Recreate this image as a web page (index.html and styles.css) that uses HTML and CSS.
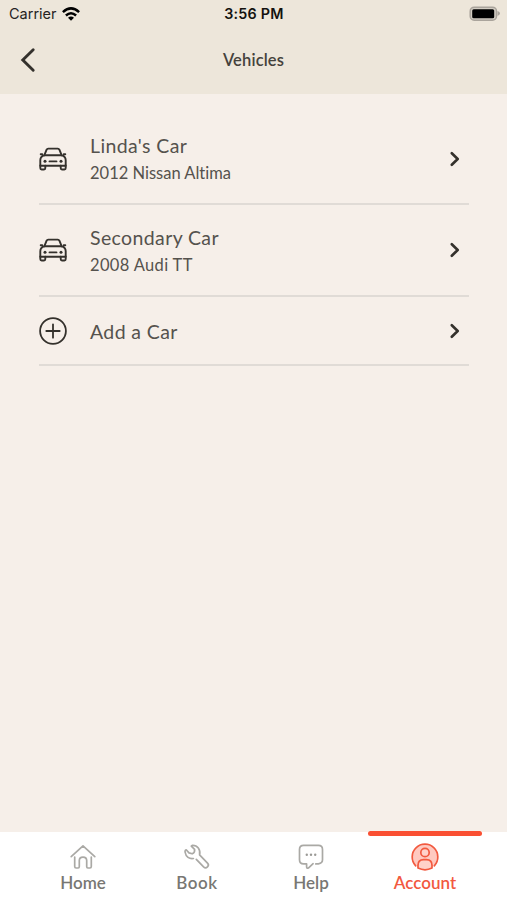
FILE: index.html
```html
<!DOCTYPE html>
<html lang="en">
<head>
<meta charset="utf-8">
<meta name="viewport" content="width=device-width, initial-scale=1">
<title>Vehicles</title>
<link rel="stylesheet" href="styles.css">
</head>
<body>
<svg width="0" height="0" class="sprite" aria-hidden="true">
  <symbol id="car" viewBox="0 0 28 24">
    <g fill="none" stroke="currentColor" stroke-width="1.9" stroke-linecap="round" stroke-linejoin="round">
      <path d="M5.3 8.3 7.6 2.7Q8 1.6 9.2 1.6H18.8Q20 1.6 20.4 2.7L22.7 8.3"/>
      <path d="M1.7 7.2H3.3M24.7 7.2H26.3M5.3 8.3H22.7Q26.7 9.3 26.7 13.2V18.7H1.3V13.2Q1.3 9.3 5.3 8.3Z"/>
      <path d="M1.3 18.5V21Q1.3 22.5 2.6 22.5H5Q6.3 22.5 6.3 21V18.8M21.7 18.8V21Q21.7 22.5 23 22.5H25.4Q26.7 22.5 26.7 21V18.5M10.5 14.4H17.5"/>
    </g>
    <circle cx="6" cy="14.2" r="1.5" fill="currentColor"/>
    <circle cx="22" cy="14.2" r="1.5" fill="currentColor"/>
  </symbol>
  <symbol id="chevron" viewBox="0 0 10 16"><path d="M1.8 2.2 7.7 8 1.8 13.8" fill="none" stroke="currentColor" stroke-width="2.6" stroke-linecap="round" stroke-linejoin="round"/></symbol>
</svg>
<header class="top">
  <div class="status">
    <div class="carrier"><span>Carrier</span>
      <svg width="18" height="14" viewBox="0 0 18 14"><g fill="none" stroke="#000" stroke-width="2.5"><path d="M.9 5.1Q9-2.3 17.1 5.1"/><path d="M3.9 8.5Q9 3.9 14.1 8.5"/></g><path d="M6 10.7Q9 8.2 12 10.7L9 13.8Z"/></svg>
    </div>
    <span class="time">3:56 PM</span>
    <svg class="battery" width="32" height="16" viewBox="0 0 32 16"><rect x="1.2" y="1.2" width="26.3" height="13" rx="4" fill="#d3cdc3" stroke="#aaa49c" stroke-width="1.5"/><rect x="3.2" y="3.2" width="22" height="9" rx="1.5"/><path d="M28.5 5.1Q31 6.1 31 7.5T28.5 9.9Z" fill="#aaa49c"/></svg>
  </div>
  <div class="nav">
    <svg class="back" width="16" height="26" viewBox="0 0 16 26"><path d="M13.2 2.8 2.8 13 13.2 23.2" fill="none" stroke="currentColor" stroke-width="2.9" stroke-linecap="round" stroke-linejoin="miter"/></svg>
    <h1>Vehicles</h1>
  </div>
</header>
<main class="list">
  <div class="row first">
    <svg class="icon" width="28" height="24"><use href="#car"/></svg>
    <div class="text"><div class="name">Linda's Car</div><div class="model">2012 Nissan Altima</div></div>
    <svg class="chev" width="10" height="16"><use href="#chevron"/></svg>
  </div>
  <div class="row">
    <svg class="icon" width="28" height="24"><use href="#car"/></svg>
    <div class="text"><div class="name">Secondary Car</div><div class="model wide">2008 Audi TT</div></div>
    <svg class="chev" width="10" height="16"><use href="#chevron"/></svg>
  </div>
  <div class="row add">
    <svg class="icon" width="28" height="28" viewBox="0 0 28 28" fill="none" stroke="currentColor" stroke-width="1.8" stroke-linecap="round"><circle cx="14" cy="14" r="12.9"/><path d="M14 7.3V20.7M7.3 14H20.7"/></svg>
    <div class="text"><div class="name">Add a Car</div></div>
    <svg class="chev" width="10" height="16"><use href="#chevron"/></svg>
  </div>
</main>
<nav class="tabs">
  <a class="tab">
    <svg width="28" height="28" viewBox="0 0 28 28" fill="none" stroke="#aaa9a5" stroke-width="1.7" stroke-linecap="round" stroke-linejoin="round"><path d="M2.2 13.6 14 2.8 25.8 13.6M5.7 14V23.6Q5.7 25 7.1 25H9.1Q10.3 25 10.3 23.6V17.6Q10.3 14.2 14 14.2T17.7 17.6V23.6Q17.7 25 18.9 25H20.9Q22.3 25 22.3 23.6V14"/></svg>
    <span>Home</span>
  </a>
  <a class="tab">
    <svg width="28" height="28" viewBox="0 0 28 28" fill="none" stroke="#aaa9a5" stroke-width="1.7" stroke-linecap="round" stroke-linejoin="round"><path d="M13.3 16.3 20.6 23.9C23.2 26.4 27 22.8 24.5 20.1L16.6 11.9C17.8 6.5 14.4 2 9.3 2.3L8.3 3.2 11.6 6.4Q12.1 9.6 9.2 10.8L6 9.9 3.2 6.8Q1.6 7.2 2.2 9.5C2.8 13.7 6.3 16.2 10.4 15.5"/></svg>
    <span class="book">Book</span>
  </a>
  <a class="tab">
    <svg width="28" height="28" viewBox="0 0 28 28"><path d="M18.8 20.9H21.4Q25.5 20.3 25.5 16.8V6.5Q25.5 2.4 21.4 2.4H6.6Q2.5 2.4 2.5 6.5V16.8Q2.5 20.9 6.6 20.9H9.6V24Q9.8 26 11.6 24.8L16.1 20.7" fill="none" stroke="#aaa9a5" stroke-width="1.7" stroke-linecap="round" stroke-linejoin="round"/><g fill="#9b9a96"><circle cx="9.8" cy="11.7" r="1.2"/><circle cx="14" cy="11.7" r="1.2"/><circle cx="18.2" cy="11.7" r="1.2"/></g></svg>
    <span>Help</span>
  </a>
  <a class="tab active">
    <svg width="28" height="28" viewBox="0 0 28 28" stroke="#f2593f" stroke-width="1.7" stroke-linecap="round" stroke-linejoin="round"><circle cx="14" cy="14" r="12" fill="#ffc9c0" stroke="none"/><path d="M4.7 22.8A12.8 12.8 0 1 1 23.3 22.8" fill="none"/><circle cx="14" cy="9.5" r="4.2" fill="#ffd2ca"/><path d="M7 25.1V22.3Q7 16.6 12.5 16.6H15.5Q21 16.6 21 22.3V25.1Q14 28.5 7 25.1Z" fill="#ffd2ca"/></svg>
    <span>Account</span>
  </a>
</nav>
</body>
</html>
```
FILE: styles.css
```css
* { box-sizing: border-box; }
body {
  margin: 0;
  height: 900px;
  display: flex;
  flex-direction: column;
  overflow: hidden;
  background: #f6efe9;
  color: #34312c;
  font-family: Lato, "Liberation Sans", sans-serif;
  font-variant-ligatures: none;
}
svg { display: block; flex: none; }
.sprite { position: absolute; }
.top { height: 94px; background: #ede6da; }
.status {
  height: 27px;
  padding: 0 6px 0 9px;
  display: grid;
  grid-template-columns: 1fr auto 1fr;
  align-items: center;
  font-family: Inter, sans-serif;
  color: #000;
}
.carrier { display: flex; align-items: center; gap: 5px; font-size: 14.5px; color: #25231f; }
.time { margin-right: 2px; font-size: 14.3px; font-weight: 600; letter-spacing: 0.25px; color: #14120f; }
.battery { justify-self: end; }
.nav {
  height: 66px;
  padding: 0 20px;
  display: grid;
  grid-template-columns: 1fr auto 1fr;
  align-items: center;
}
h1 { margin: 0; font-size: 16.5px; font-weight: 600; line-height: 20px; letter-spacing: 0.15px; color: #45423c; }
.list { flex: 1; padding: 20px 38px 0 39px; }
.row {
  height: 92px;
  display: flex;
  align-items: center;
  border-bottom: 2px solid #e0dbd6;
}
.first { height: 91px; }
.add { height: 69px; }
.text { flex: 1; padding: 2px 0 0 23px; color: #55524d; white-space: nowrap; }
.name { font-size: 19.5px; line-height: 28px; letter-spacing: 0.38px; }
.model { font-size: 16.5px; line-height: 27px; }
.wide { letter-spacing: 0.35px; }
.chev { margin-right: 9px; }
.tabs { height: 68px; padding-left: 26px; background: #fff; display: flex; }
.tab {
  position: relative;
  width: 114px;
  padding-top: 11px;
  display: flex;
  flex-direction: column;
  align-items: center;
  font-size: 17px;
  font-weight: 600;
  line-height: 23px;
  color: #787773;
}
.book { letter-spacing: 0.5px; }
.active { color: #f2593f; }
.active::before {
  content: "";
  position: absolute;
  top: -1px;
  left: 0;
  width: 114px;
  height: 5px;
  border-radius: 3px;
  background: #fa4f32;
}
```
